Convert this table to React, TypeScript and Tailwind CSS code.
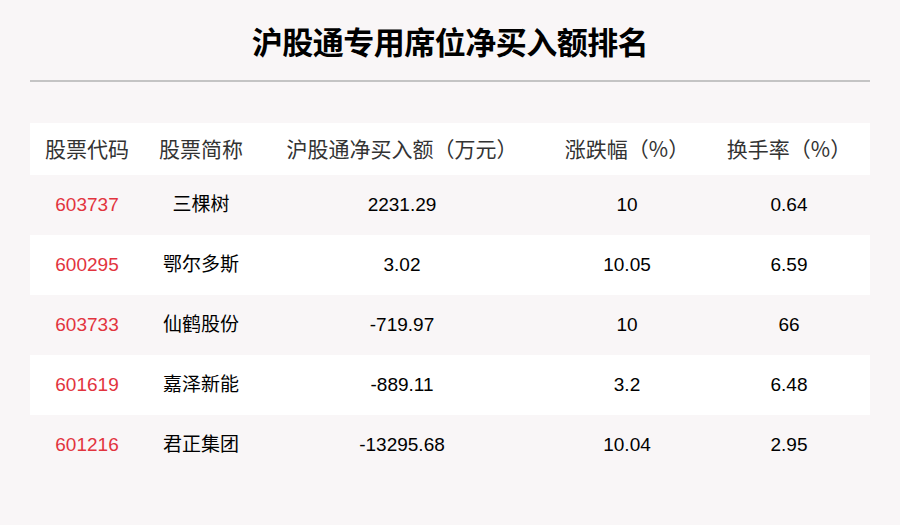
import React from "react";

const rows = [
  ["603737", "三棵树", "2231.29", "10", "0.64"],
  ["600295", "鄂尔多斯", "3.02", "10.05", "6.59"],
  ["603733", "仙鹤股份", "-719.97", "10", "66"],
  ["601619", "嘉泽新能", "-889.11", "3.2", "6.48"],
  ["601216", "君正集团", "-13295.68", "10.04", "2.95"],
];

const cols = "grid grid-cols-[114px_114px_288px_162px_162px]";

export default function App() {
  return (
    <div
      className="w-[900px] h-[525px] bg-[#f9f6f7] px-[30px] overflow-hidden"
      style={{ fontFamily: '"Liberation Sans", "Noto Sans CJK SC", sans-serif' }}
    >
      <div className="h-[80px] flex items-center justify-center pt-[2px]">
        <h1
          className="text-[31px] font-bold text-black tracking-[-0.5px]"
          style={{ fontFamily: '"Noto Sans CJK SC", sans-serif' }}
        >
          沪股通专用席位净买入额排名
        </h1>
      </div>
      <div className="h-[2px] bg-[#c4c4c4]" />
      <div className="mt-[41px]">
        <div
          className={`${cols} h-[52px] bg-white items-center text-center text-[21px] text-[#333]`}
          style={{ fontFamily: '"Noto Sans CJK SC", sans-serif' }}
        >
          <div>股票代码</div>
          <div>股票简称</div>
          <div>沪股通净买入额（万元）</div>
          <div>涨跌幅（%）</div>
          <div>换手率（%）</div>
        </div>
        {rows.map((r, i) => (
          <div
            key={r[0]}
            className={`${cols} h-[60px] items-center text-center text-[19px] text-black ${
              i % 2 === 0 ? "bg-[#f9f6f7]" : "bg-white"
            }`}
          >
            <div className="text-[#e2343e]">{r[0]}</div>
            <div>{r[1]}</div>
            <div>{r[2]}</div>
            <div>{r[3]}</div>
            <div>{r[4]}</div>
          </div>
        ))}
      </div>
    </div>
  );
}
